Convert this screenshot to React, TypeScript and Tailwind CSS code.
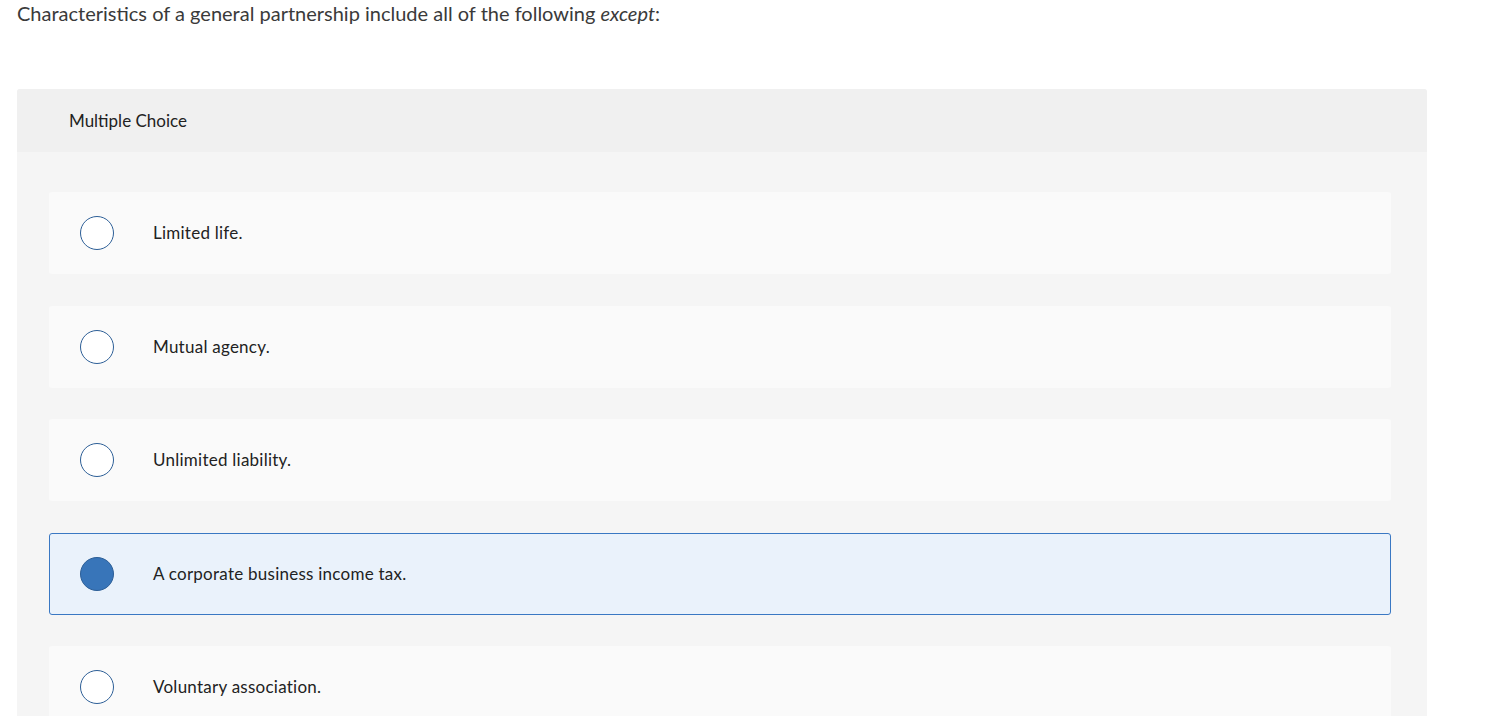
const options = [
  { label: "Limited life.", selected: false },
  { label: "Mutual agency.", selected: false },
  { label: "Unlimited liability.", selected: false },
  { label: "A corporate business income tax.", selected: true },
  { label: "Voluntary association.", selected: false },
];

export default function App() {
  return (
    <div className="min-h-[716px] bg-white pl-[17px] font-['Lato','Open_Sans',sans-serif] text-[#333]">
      {/* Question prompt */}
      <p className="text-[20px] leading-[26px] font-normal text-[#3a3a3a]">
        Characteristics of a general partnership include all of the following{" "}
        <em>except</em>:
      </p>

      {/* Answer card */}
      <div className="mt-[63px] w-[1410px] overflow-hidden rounded-[3px] bg-[#f5f5f5]">
        <div className="flex h-[63px] items-center bg-[#f0f0f0] pl-[52px] text-[17px] text-[#222]">
          Multiple Choice
        </div>

        <div className="flex flex-col gap-[31.5px] pt-[40px] pr-[36px] pb-[32px] pl-[32px]">
          {options.map((opt, i) => (
            <label
              key={i}
              className={
                opt.selected
                  ? "flex h-[82px] items-center rounded-[3px] border border-[#3a78c3] bg-[#eaf2fb] pl-[30px]"
                  : "flex h-[82px] items-center rounded-[3px] border border-transparent bg-[#fafafa] pl-[30px]"
              }
            >
              <span
                className={
                  opt.selected
                    ? "h-[34px] w-[34px] shrink-0 rounded-full border border-[#2d5f97] bg-[#3875b9]"
                    : "h-[34px] w-[34px] shrink-0 rounded-full border-[1.5px] border-[#2d5f97] bg-white"
                }
              ></span>
              <span className="ml-[39px] text-[17px] tracking-[0.25px] text-[#222]">
                {opt.label}
              </span>
            </label>
          ))}
        </div>
      </div>
    </div>
  );
}
